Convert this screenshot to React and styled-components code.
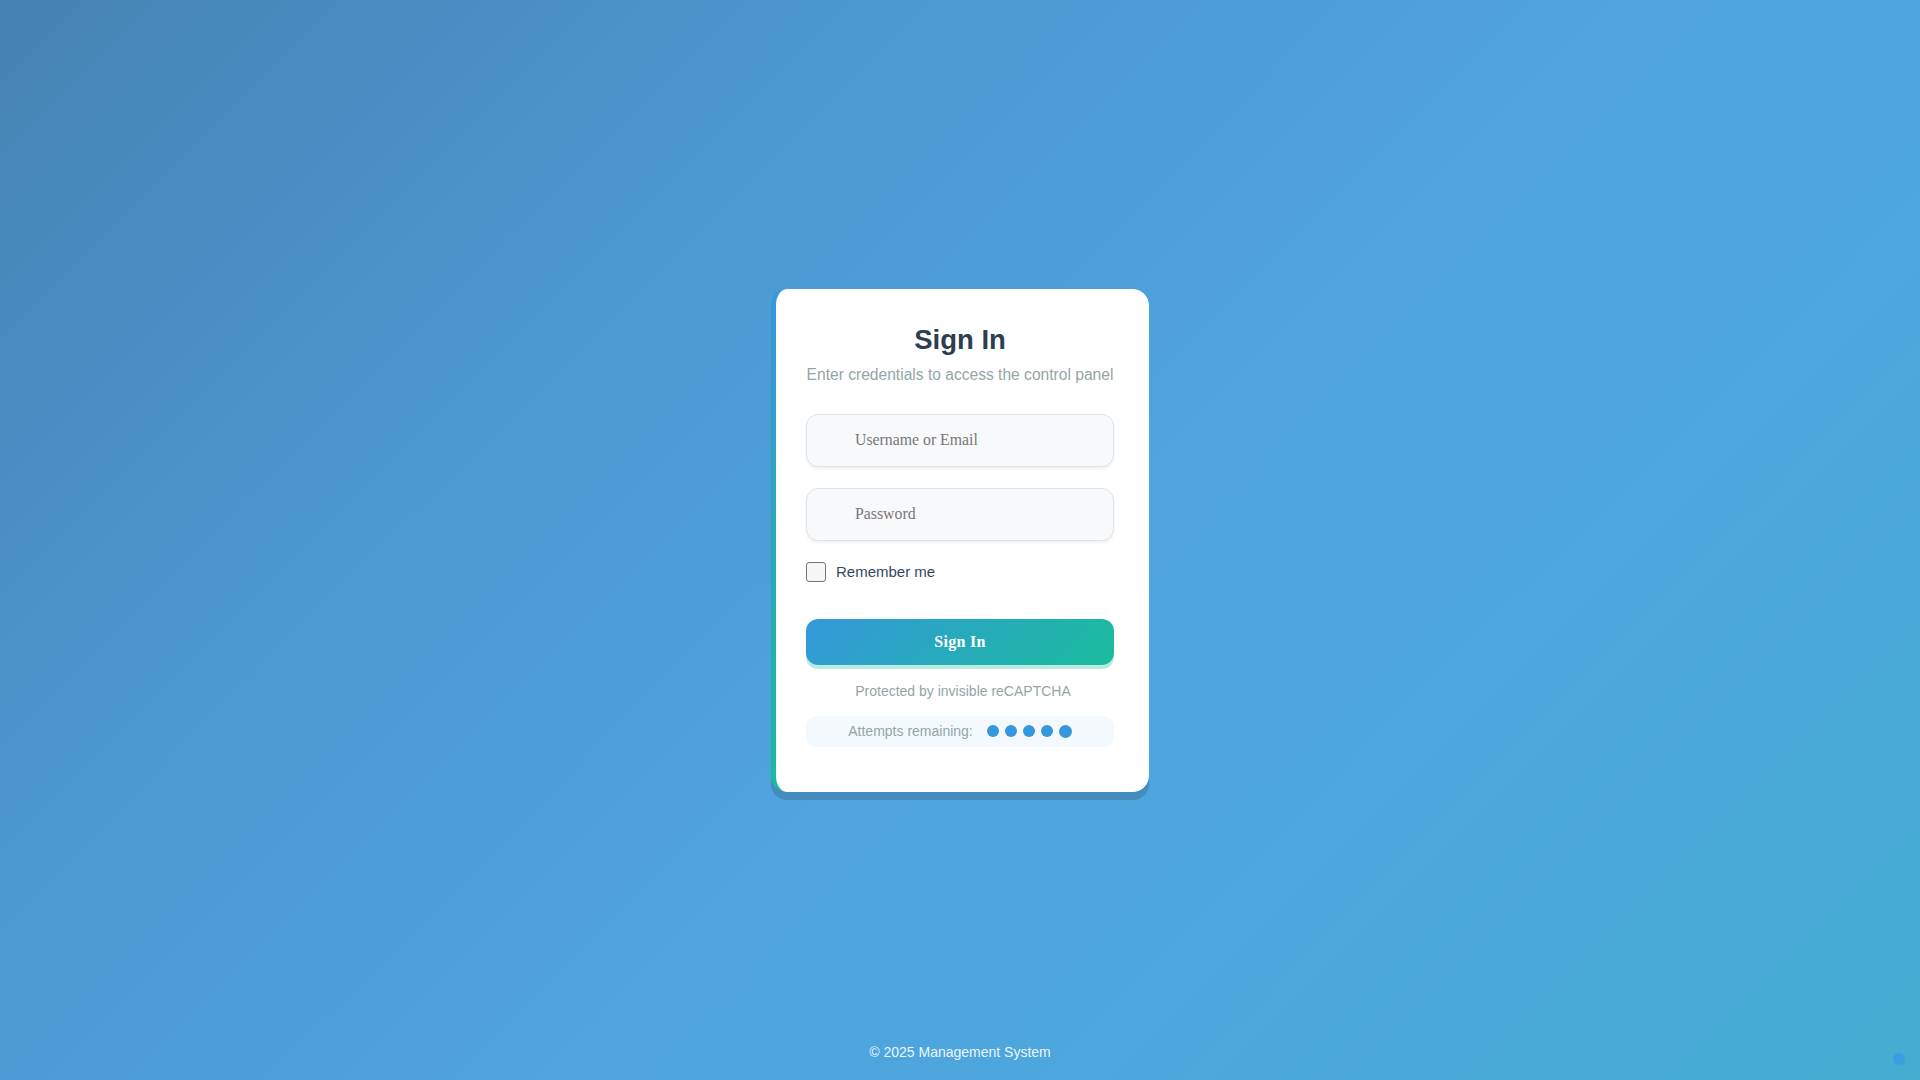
import React from "react";
import styled, { createGlobalStyle } from "styled-components";

const Global = createGlobalStyle`
  * { box-sizing: border-box; }
  html, body { margin: 0; padding: 0; }
  body {
    font-family: "Liberation Sans", Arial, sans-serif;
    min-height: 100vh;
    background: linear-gradient(135deg, #4683b3 0%, #4c98d0 30%, #4fa4df 55%, #4ea6de 70%, #45acd0 100%);
  }
`;

const Page = styled.div`
  position: relative;
  min-height: 100vh;
  display: flex;
  align-items: center;
  justify-content: center;
`;

const Card = styled.div`
  width: 378px;
  padding: 35px 35px 35px 30px;
  border-radius: 16px;
  border-left: 5px solid transparent;
  background:
    linear-gradient(#ffffff, #ffffff) padding-box,
    linear-gradient(to bottom, #3498db, #1abc9c) border-box;
  box-shadow: 0 8px 0 rgba(0, 0, 0, 0.14);
`;

const Title = styled.h1`
  margin: 0 0 10px;
  text-align: center;
  font-size: 27.5px;
  font-weight: 700;
  color: #2c3e50;
  line-height: 32px;
`;

const Subtitle = styled.p`
  margin: 0 0 30px;
  text-align: center;
  font-size: 15.6px;
  color: #95a5a6;
  line-height: normal;
  white-space: nowrap;
`;

const Field = styled.input`
  display: block;
  width: 100%;
  height: 53px;
  margin: 0 0 21px;
  padding: 0 16px 0 48px;
  border: 1px solid #dde4ec;
  border-radius: 12px;
  background: #f8f9fb;
  box-shadow: 0 2px 3px rgba(0, 0, 0, 0.06);
  font-family: "Liberation Serif", "Times New Roman", serif;
  font-size: 15.8px;
  color: #2c3e50;
  outline: none;
  &::placeholder { color: #777777; }
`;

const RememberRow = styled.label`
  display: flex;
  align-items: center;
  gap: 10px;
  height: 20px;
  margin: 0 0 37px;
  font-size: 15px;
  color: #34495e;
  cursor: pointer;
`;

const Box = styled.span`
  width: 20px;
  height: 20px;
  border: 1.5px solid #767676;
  border-radius: 3px;
  background: #f6f7f8;
  flex: none;
`;

const SubmitButton = styled.button`
  display: block;
  width: 100%;
  height: 46px;
  border: none;
  border-radius: 12px;
  background: linear-gradient(135deg, #3498db 0%, #1abc9c 100%);
  box-shadow: 0 4px 0 rgba(26, 188, 156, 0.3);
  color: #ffffff;
  font-family: "Liberation Serif", "Times New Roman", serif;
  font-size: 16px;
  font-weight: 700;
  letter-spacing: 0.3px;
  cursor: pointer;
`;

const Protected = styled.p`
  margin: 18px 0 17px;
  padding-left: 6px;
  text-align: center;
  font-size: 14px;
  color: #95a5a6;
  line-height: normal;
`;

const Attempts = styled.div`
  display: flex;
  align-items: center;
  justify-content: center;
  height: 31px;
  margin-bottom: 10px;
  border-radius: 10px;
  background: #f4f9fe;
  font-size: 14px;
  color: #95a5a6;
`;

const Dots = styled.div`
  display: flex;
  align-items: center;
  gap: 6px;
  margin-left: 14px;
`;

const Dot = styled.span`
  width: ${(p) => (p.$big ? 13 : 12)}px;
  height: ${(p) => (p.$big ? 13 : 12)}px;
  border-radius: 50%;
  background: #3498db;
`;

const Footer = styled.div`
  position: absolute;
  left: 0;
  right: 0;
  bottom: 20px;
  text-align: center;
  font-size: 14px;
  color: rgba(255, 255, 255, 0.92);
`;

const Badge = styled.div`
  position: absolute;
  right: 15px;
  bottom: 15px;
  width: 12px;
  height: 12px;
  border-radius: 50%;
  background: #3a9de2;
`;

export default function App() {
  return (
    <>
      <Global />
      <Page>
        <Card>
          <Title>Sign In</Title>
          <Subtitle>Enter credentials to access the control panel</Subtitle>
          <Field type="text" placeholder="Username or Email" />
          <Field type="password" placeholder="Password" />
          <RememberRow>
            <Box />
            Remember me
          </RememberRow>
          <SubmitButton type="button">Sign In</SubmitButton>
          <Protected>Protected by invisible reCAPTCHA</Protected>
          <Attempts>
            Attempts remaining:
            <Dots>
              {[0, 1, 2, 3, 4].map((i) => (
                <Dot key={i} $big={i === 4} />
              ))}
            </Dots>
          </Attempts>
        </Card>
        <Footer>© 2025 Management System</Footer>
        <Badge />
      </Page>
    </>
  );
}
